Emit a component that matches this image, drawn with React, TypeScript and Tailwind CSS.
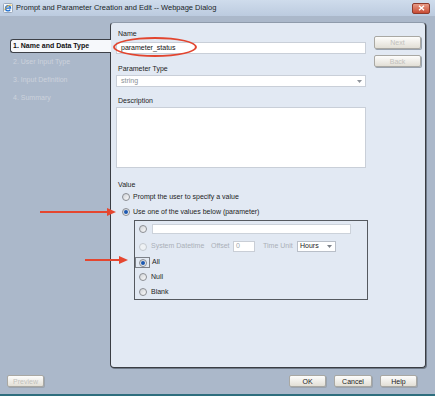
import React from "react";

const font = "font-['Liberation_Sans',Arial,sans-serif]";

function Radio({ checked = false, disabled = false }: { checked?: boolean; disabled?: boolean }) {
  return (
    <span
      className={
        "flex h-[8px] w-[8px] shrink-0 items-center justify-center rounded-full border " +
        (disabled
          ? "border-[#c3c8ce] bg-[#eef1f4]"
          : "border-[#8b8e93] bg-gradient-to-br from-[#cfd2d7] to-[#fbfbfb]")
      }
    >
      {checked && <span className="h-[4px] w-[4px] rounded-full bg-[#1c58b0]" />}
    </span>
  );
}

function WinButton({
  label,
  disabled = false,
  className = "",
}: {
  label: string;
  disabled?: boolean;
  className?: string;
}) {
  return (
    <div
      className={
        "flex items-center justify-center rounded-[2px] border border-[#a9a8a3] bg-gradient-to-b from-[#fdfdfc] to-[#e2dfd6] text-[7px] leading-none shadow-[1px_1px_0_#9aa3ae] " +
        (disabled ? "text-[#c2c1bc] " : "text-[#1b1b1b] ") +
        className
      }
    >
      {label}
    </div>
  );
}

function Label({ children, className = "" }: { children: React.ReactNode; className?: string }) {
  return <div className={"pl-[2px] text-[7px] leading-[9px] text-[#1d1d1d] " + className}>{children}</div>;
}

export default function App() {
  const steps = ["2. User Input Type", "3. Input Definition", "4. Summary"];

  return (
    <div className={`relative flex h-[396px] w-[435px] flex-col overflow-hidden bg-[#abb8ca] ${font}`}>
      {/* Title bar */}
      <div className="flex h-[16px] shrink-0 items-center bg-gradient-to-b from-[#cfdcec] to-[#bccbdf] pl-[3px] pr-[5px]">
        <svg width="10" height="10" viewBox="0 0 10 10">
          <rect x="0.5" y="0.5" width="9" height="9" rx="1" fill="#f4f7fb" stroke="#9aa8ba" />
          <path d="M2.5 5.2h5c0-1.6-1.1-2.6-2.5-2.6S2.5 3.7 2.5 5.2s1 2.6 2.5 2.6c1 0 1.8-.5 2.2-1.2" fill="none" stroke="#1e6fd0" strokeWidth="1.3" />
          <path d="M1.5 7.2C3 3 7 1.5 8.8 2.3" fill="none" stroke="#f0b429" strokeWidth="0.9" />
        </svg>
        <span className="ml-[3px] text-[7.5px] leading-none text-[#1a1f28]">
          Prompt and Parameter Creation and Edit -- Webpage Dialog
        </span>
        <div className="ml-auto flex h-[11px] w-[18px] items-center justify-center rounded-[2px] border border-[#8e3a2c] bg-gradient-to-b from-[#e79a86] to-[#c84a33]">
          <svg width="7" height="6" viewBox="0 0 7 6">
            <path d="M1 0.8l5 4.4M6 0.8l-5 4.4" stroke="#ffffff" strokeWidth="1.4" />
          </svg>
        </div>
      </div>

      {/* Body */}
      <div className="mt-[6px] flex h-[346px] shrink-0">
        {/* Step list */}
        <div className="relative z-10 w-[110px] shrink-0 pt-[17px]">
          <div className="-mr-[1px] ml-[10px] flex h-[14px] items-center rounded-l-[3px] border border-r-0 border-[#3d4047] bg-[#f6f8fb] pl-[2px] text-[7px] font-bold text-[#111]">
            1. Name and Data Type
          </div>
          <div className="pl-[13px] pt-[4px]">
            {steps.map((s) => (
              <div key={s} className="mb-[9px] text-[7px] leading-[9px] text-[#cbd2dc]">
                {s}
              </div>
            ))}
          </div>
        </div>

        {/* Main panel */}
        <div className="flex h-full w-[316px] shrink-0 rounded-[4px] border border-[#3a3d43] border-t-[#8f9bab] bg-[#e2e9f3] pl-[5px] shadow-[1px_1px_0_#6f7a88]">
          <div className="flex w-[250px] shrink-0 flex-col">
            <Label className="mt-[6px]">Name</Label>
            <div className="mt-[4px] flex h-[12px] items-center border border-[#c9cfd8] bg-white pl-[4px] text-[7px] text-[#111]">
              parameter_status
            </div>

            <Label className="mt-[10px]">Parameter Type</Label>
            <div className="mt-[2px] flex h-[12px] items-center border border-[#c9cfd8] bg-white pl-[4px] pr-[3px] text-[7px] text-[#8a8f96]">
              <span>string</span>
              <svg className="ml-auto" width="5" height="3" viewBox="0 0 5 3">
                <path d="M0 0h5L2.5 3z" fill="#8f949b" />
              </svg>
            </div>

            <Label className="mt-[9px]">Description</Label>
            <div className="mt-[2px] h-[61px] border border-[#c9cfd8] bg-white" />

            <Label className="mt-[12px]">Value</Label>
            <div className="mt-[3px] flex h-[10px] items-center gap-[3px] pl-[6px] text-[7px] text-[#1d1d1d]">
              <Radio />
              <span>Prompt the user to specify a value</span>
            </div>
            <div className="mt-[5px] flex h-[10px] items-center gap-[3px] pl-[6px] text-[7px] text-[#1d1d1d]">
              <Radio checked />
              <span>Use one of the values below (parameter)</span>
            </div>

            {/* Value group */}
            <div className="ml-[18px] mt-[3px] flex h-[80px] w-[234px] flex-col border border-[#55595f] pt-[3px] text-[7px]">
              <div className="flex h-[10px] items-center">
                <span className="flex w-[16px] justify-center">
                  <Radio />
                </span>
                <div className="ml-[1px] h-[10px] w-[199px] border border-[#ccd2da] bg-white" />
              </div>
              <div className="mt-[7px] flex h-[11px] items-center text-[#aab0b8]">
                <span className="flex w-[16px] justify-center">
                  <Radio disabled />
                </span>
                <span className="w-[60px]">System Datetime</span>
                <span className="w-[22px]">Offset</span>
                <div className="flex h-[11px] w-[22px] items-center border border-[#c9ced6] bg-white pl-[2px] text-[#a0a6ae]">
                  0
                </div>
                <span className="ml-[8px] w-[34px]">Time Unit</span>
                <div className="flex h-[11px] w-[39px] items-center border border-[#b9bfc8] bg-white pl-[2px] pr-[3px] text-[#222]">
                  <span>Hours</span>
                  <svg className="ml-auto" width="5" height="3" viewBox="0 0 5 3">
                    <path d="M0 0h5L2.5 3z" fill="#7d828a" />
                  </svg>
                </div>
              </div>
              <div className="mt-[5px] flex h-[11px] items-center text-[#1d1d1d]">
                <span className="flex h-[11px] w-[15px] items-center justify-center border border-[#7c8088]">
                  <Radio checked />
                </span>
                <span className="ml-[2px]">All</span>
              </div>
              <div className="mt-[4px] flex h-[10px] items-center text-[#1d1d1d]">
                <span className="flex w-[16px] justify-center">
                  <Radio />
                </span>
                <span>Null</span>
              </div>
              <div className="mt-[5px] flex h-[10px] items-center text-[#1d1d1d]">
                <span className="flex w-[16px] justify-center">
                  <Radio />
                </span>
                <span>Blank</span>
              </div>
            </div>
          </div>

          <div className="ml-[8px] mt-[13px] flex flex-col">
            <WinButton label="Next" disabled className="h-[13px] w-[47px]" />
            <WinButton label="Back" disabled className="mt-[6px] h-[12px] w-[47px]" />
          </div>
        </div>
      </div>

      {/* Footer buttons */}
      <div className="mt-[7px] flex h-[12px] shrink-0 items-center">
        <WinButton label="Preview" disabled className="ml-[7px] h-[12px] w-[37px]" />
        <div className="ml-auto mr-[18px] flex gap-[8px]">
          <WinButton label="OK" className="h-[12px] w-[37px]" />
          <WinButton label="Cancel" className="h-[12px] w-[38px]" />
          <WinButton label="Help" className="h-[12px] w-[37px]" />
        </div>
      </div>
      <div className="mt-[7px] h-[2px] shrink-0 bg-[#2e6e7e]" />

      {/* Annotations */}
      <div className="pointer-events-none absolute left-[113px] top-[37px] h-[20px] w-[84px] rounded-[50%] border-2 border-[#e2452f]" />
      <svg className="pointer-events-none absolute left-0 top-0" width="435" height="396">
        <line x1="40" y1="212" x2="109" y2="212" stroke="#e5462f" strokeWidth="2" />
        <path d="M107 208L116 212L107 216Z" fill="#e5462f" />
        <line x1="85" y1="260" x2="121" y2="260" stroke="#e5462f" strokeWidth="2" />
        <path d="M119 256L128 260L119 264Z" fill="#e5462f" />
      </svg>
    </div>
  );
}
